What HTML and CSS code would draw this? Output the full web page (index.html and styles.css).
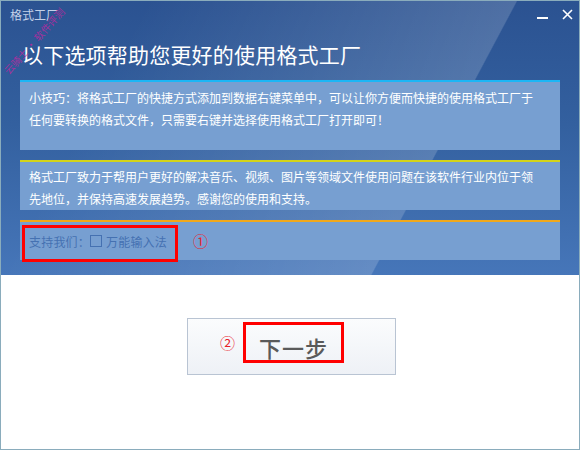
FILE: index.html
```html
<!DOCTYPE html>
<html lang="zh-CN">
<head>
<meta charset="utf-8">
<title>格式工厂</title>
<link rel="stylesheet" href="styles.css">
</head>
<body>
<div class="window">
  <div class="top">
    <div class="titlebar">
      <span class="title">格式工厂</span>
      <div class="controls">
        <span class="min"></span>
        <svg class="close" width="11" height="11" viewBox="0 0 11 11"><path d="M1 1 L10 10 M10 1 L1 10" stroke="#fff" stroke-width="1.6"/></svg>
      </div>
    </div>
    <div class="watermark">云骑士 · 软件评测</div>
    <h1 class="heading">以下选项帮助您更好的使用格式工厂</h1>
    <div class="panel panel-tip">
      <p>小技巧：将格式工厂的快捷方式添加到数据右键菜单中，可以让你方便而快捷的使用格式工厂于<br>任何要转换的格式文件，只需要右键并选择使用格式工厂打开即可！</p>
    </div>
    <div class="panel panel-about">
      <p>格式工厂致力于帮用户更好的解决音乐、视频、图片等领域文件使用问题在该软件行业内位于领<br>先地位，并保持高速发展趋势。感谢您的使用和支持。</p>
    </div>
    <div class="panel panel-support">
      <span class="support">支持我们：</span><span class="check"></span><span class="support">万能输入法</span>
      <span class="num num1">①</span>
      <span class="mark mark1"></span>
    </div>
  </div>
  <div class="bottom">
    <div class="next">
      <span class="num num2">②</span>
      <span class="next-label">下一步</span>
      <span class="mark mark2"></span>
    </div>
  </div>
</div>
</body>
</html>
```

FILE: styles.css
```css
* { box-sizing: border-box; }
html, body { margin: 0; padding: 0; }
body {
  width: 580px;
  height: 450px;
  font-family: "Noto Sans CJK SC", "DejaVu Sans", sans-serif;
  overflow: hidden;
}
.window {
  width: 580px;
  height: 450px;
  border: 1px solid #8aacbc;
  display: flex;
  flex-direction: column;
  background: #fff;
}
.top {
  position: relative;
  height: 274px;
  flex: none;
  background:
    linear-gradient(118deg, rgba(255,255,255,0) 20%, rgba(255,255,255,0.17) 71.2%, rgba(255,255,255,0) 71.4%),
    linear-gradient(180deg, #2b5291 0%, #33609f 45%, #4676b9 100%);
  overflow: hidden;
}
.titlebar {
  height: 28px;
  display: flex;
  justify-content: space-between;
  align-items: center;
  padding: 0 6px 0 9px;
}
.title {
  font-size: 12px;
  color: #c3d1e8;
  line-height: 14px;
  margin-top: -1px;
}
.controls {
  display: flex;
  align-items: center;
  gap: 14px;
}
.min {
  width: 11px;
  height: 2px;
  background: #fff;
  margin-top: 6px;
}
.close { display: block; margin-top: -2px; }
.watermark {
  position: absolute;
  left: -9px;
  top: 34px;
  transform: rotate(-48deg);
  font-size: 10px;
  color: rgba(190, 40, 160, 0.85);
  white-space: nowrap;
  line-height: 12px;
}
.heading {
  margin: 10px 0 0 21px;
  font-size: 21px;
  font-weight: normal;
  color: #fff;
  line-height: 30px;
  letter-spacing: 0.2px;
}
.panel {
  margin: 0 19px;
  background: #779fd1;
  color: #fff;
  font-size: 12px;
}
.panel p {
  margin: 0;
  line-height: 22px;
  letter-spacing: 0;
  white-space: nowrap;
}
.panel-tip {
  margin-top: 11px;
  height: 70px;
  border-top: 2px solid #1cb6f5;
  padding: 5px 20px 0 9px;
}
.panel-about {
  margin-top: 10px;
  height: 50px;
  border-top: 2px solid #d4d41a;
  padding: 4px 20px 0 9px;
}
.panel-support {
  position: relative;
  margin-top: 10px;
  height: 40px;
  border-top: 2px solid #f0a81c;
  padding: 0 9px;
  display: flex;
  align-items: center;
}
.support {
  color: #4571b1;
  font-size: 12px;
  letter-spacing: 0.2px;
}
.check {
  width: 12px;
  height: 12px;
  border: 1px solid #4571b1;
  margin: 0 4px 0 0;
}
.num {
  color: #e8202a;
  font-size: 15px;
  line-height: 16px;
}
.num1 {
  margin-left: 26px;
}
.mark {
  position: absolute;
  border: 3px solid #ff0000;
}
.mark1 {
  left: 2px;
  top: 3px;
  width: 156px;
  height: 37px;
}
.bottom {
  flex: 1;
  display: flex;
  justify-content: center;
  padding-top: 43px;
  padding-left: 3px;
}
.next {
  position: relative;
  width: 209px;
  height: 57px;
  border: 1px solid #b9c4d3;
  background: linear-gradient(180deg, #fbfcfd 0%, #eef1f6 100%);
  display: flex;
  align-items: center;
  justify-content: center;
}
.num2 {
  position: absolute;
  left: 32px;
  top: 16px;
  font-size: 15px;
}
.next-label {
  font-size: 22px;
  color: #5a5a5a;
  letter-spacing: 1px;
  margin-left: 4px;
  font-weight: 500;
}
.mark2 {
  left: 55px;
  top: 3px;
  width: 101px;
  height: 41px;
}
```
